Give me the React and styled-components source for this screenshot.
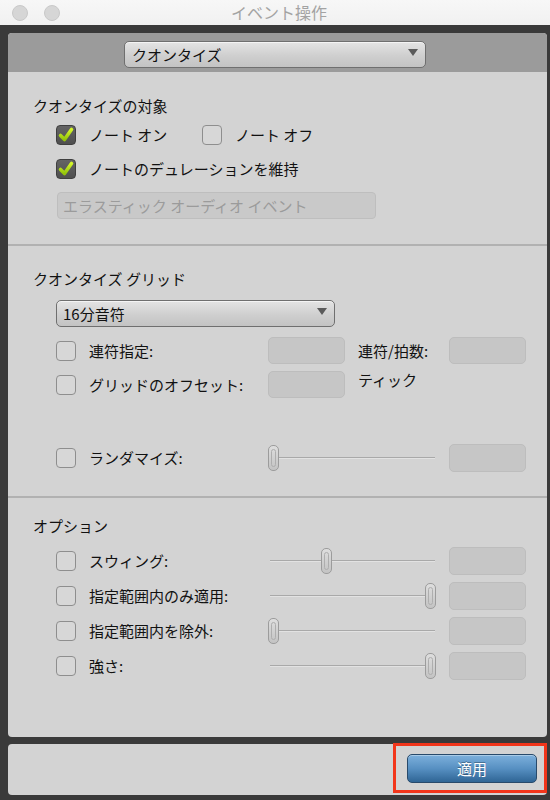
import React from 'react';
import styled, { createGlobalStyle } from 'styled-components';

const Global = createGlobalStyle`
  body {
    margin: 0;
    font-family: "Noto Sans CJK JP", "Noto Sans", sans-serif;
    color: #111;
  }
`;

const CheckMark = () => (
  <svg width="18" height="18" viewBox="0 0 18 18">
    <defs>
      <linearGradient id="lime" x1="0" y1="0" x2="0" y2="1">
        <stop offset="0" stopColor="#d4f52a" />
        <stop offset="1" stopColor="#94c40a" />
      </linearGradient>
    </defs>
    <path d="M3.5 9.5 L7.5 13.5 L14.5 3.5" fill="none" stroke="url(#lime)" strokeWidth="3.6" strokeLinecap="round" strokeLinejoin="round" />
  </svg>
);

const Check = ({ checked }) => <Box $checked={checked}>{checked && <CheckMark />}</Box>;

const Slider = ({ value }) => (
  <SliderWrap>
    <Track />
    <Thumb style={{ left: `${value * 157}px` }} />
  </SliderWrap>
);

const App = () => {
  return (
    <Window>
      <Global />
      <TitleBar>
        <Lights>
          <Light />
          <Light />
        </Lights>
        <Title>イベント操作</Title>
        <span />
      </TitleBar>
      <Frame>
        <MainPanel>
          <Header>
            <Select $width={302} $textLeft={7}>
              クオンタイズ
              <Arrow />
            </Select>
          </Header>

          <Section $pt={24} $pb={25} $divider>
            <SectionTitle>クオンタイズの対象</SectionTitle>
            <Indent $mt={8} $gap={12}>
              <Row $h={22}>
                <Option $width={146}>
                  <Check checked />
                  <Label>ノート オン</Label>
                </Option>
                <Option>
                  <Check />
                  <Label>ノート オフ</Label>
                </Option>
              </Row>
              <Row $h={22}>
                <Option>
                  <Check checked />
                  <Label>ノートのデュレーションを維持</Label>
                </Option>
              </Row>
              <DisabledField>エラスティック オーディオ イベント</DisabledField>
            </Indent>
          </Section>

          <Section $pt={23} $pb={24} $divider>
            <SectionTitle>クオンタイズ グリッド</SectionTitle>
            <Indent $mt={11} $gap={0}>
              <Select $width={279} $textLeft={6}>
                16分音符
                <Arrow />
              </Select>
              <Row $h={27} $mt={10}>
                <Check />
                <RowLabel>連符指定:</RowLabel>
                <NumField />
                <SideLabel>連符/拍数:</SideLabel>
                <NumField $gap />
              </Row>
              <Row $h={27} $mt={7}>
                <Check />
                <RowLabel>グリッドのオフセット:</RowLabel>
                <NumField />
                <SideLabel $top>ティック</SideLabel>
              </Row>
              <Row $h={28} $mt={46}>
                <Check />
                <RowLabel>ランダマイズ:</RowLabel>
                <Slider value={0} />
                <NumField $gap />
              </Row>
            </Indent>
          </Section>

          <Section $pt={18} $grow>
            <SectionTitle>オプション</SectionTitle>
            <Indent $mt={11} $gap={7}>
              {[
                ['スウィング:', 0.34],
                ['指定範囲内のみ適用:', 1],
                ['指定範囲内を除外:', 0],
                ['強さ:', 1],
              ].map(([label, v]) => (
                <Row $h={28} key={label}>
                  <Check />
                  <RowLabel>{label}</RowLabel>
                  <Slider value={v} />
                  <NumField $gap />
                </Row>
              ))}
            </Indent>
          </Section>
        </MainPanel>

        <Footer>
          <Highlight>
            <ApplyButton>適用</ApplyButton>
          </Highlight>
        </Footer>
      </Frame>
    </Window>
  );
};

export default App;

const Window = styled.div`
  width: 550px;
  height: 800px;
  background: #3a3a3a;
  display: flex;
  flex-direction: column;
  overflow: hidden;
`;

const TitleBar = styled.div`
  height: 25px;
  flex: none;
  background: linear-gradient(#f7f7f7, #f1f1f1);
  display: grid;
  grid-template-columns: 1fr auto 1fr;
  align-items: center;
`;

const Lights = styled.div`
  display: flex;
  gap: 16px;
  padding-left: 12px;
`;

const Light = styled.div`
  width: 14px;
  height: 14px;
  border-radius: 50%;
  background: #d6d6d6;
  border: 1px solid #c9c9c9;
`;

const Title = styled.div`
  font-size: 16px;
  color: #a3a3a3;
  line-height: 25px;
  padding-left: 8px;
`;

const Frame = styled.div`
  flex: 1;
  padding: 8px 3px 5px 8px;
  display: flex;
  flex-direction: column;
  gap: 7px;
`;

const MainPanel = styled.div`
  height: 704px;
  background: #d3d3d3;
  border-radius: 4px;
  overflow: hidden;
  display: flex;
  flex-direction: column;
`;

const Header = styled.div`
  height: 39px;
  flex: none;
  box-sizing: border-box;
  background: #9b9b9b;
  display: flex;
  justify-content: center;
  align-items: flex-start;
  padding: 8px 5px 0 0;
`;

const Select = styled.div`
  position: relative;
  width: ${(p) => p.$width}px;
  height: 27px;
  box-sizing: border-box;
  border: 1px solid #6f6f6f;
  border-radius: 5px;
  background: linear-gradient(#e4e4e4, #cfcfcf 55%, #c3c3c3);
  box-shadow: inset 0 1px 0 rgba(255, 255, 255, 0.6);
  font-size: 15px;
  line-height: 25px;
  padding-left: ${(p) => p.$textLeft}px;
  color: #111;
`;

const Arrow = styled.span`
  position: absolute;
  right: 7px;
  top: 7px;
  width: 0;
  height: 0;
  border-left: 5px solid transparent;
  border-right: 5px solid transparent;
  border-top: 7px solid #5b5b5b;
`;

const Section = styled.div`
  flex: ${(p) => (p.$grow ? 1 : 'none')};
  padding: ${(p) => p.$pt}px 0 ${(p) => p.$pb || 0}px 25px;
  border-bottom: ${(p) => (p.$divider ? '2px solid #b1b1b1' : 'none')};
  display: flex;
  flex-direction: column;
`;

const SectionTitle = styled.div`
  font-size: 15px;
  line-height: 20px;
  height: 20px;
`;

const Indent = styled.div`
  margin: ${(p) => p.$mt}px 0 0 23px;
  display: flex;
  flex-direction: column;
  gap: ${(p) => p.$gap}px;
`;

const Row = styled.div`
  display: flex;
  align-items: center;
  height: ${(p) => p.$h}px;
  margin-top: ${(p) => p.$mt || 0}px;
`;

const Option = styled.div`
  display: flex;
  align-items: center;
  width: ${(p) => (p.$width ? `${p.$width}px` : 'auto')};
`;

const Box = styled.div`
  width: 20px;
  height: 20px;
  flex: none;
  box-sizing: border-box;
  border-radius: 4px;
  border: ${(p) => (p.$checked ? '1px solid #3f3f3f' : '1.5px solid #8e8e8e')};
  background: ${(p) => (p.$checked ? 'linear-gradient(#646464, #4f4f4f)' : '#d7d7d7')};
  display: flex;
  align-items: center;
  justify-content: center;
`;

const Label = styled.span`
  font-size: 15px;
  line-height: 20px;
  margin-left: 13px;
  white-space: nowrap;
`;

const RowLabel = styled(Label)`
  width: 179px;
  margin-left: 13px;
  flex: none;
`;

const SideLabel = styled.span`
  width: 78px;
  flex: none;
  margin-left: 13px;
  font-size: 15px;
  line-height: 18px;
  align-self: ${(p) => (p.$top ? 'flex-start' : 'center')};
  white-space: nowrap;
`;

const NumField = styled.div`
  width: 77px;
  height: 100%;
  flex: none;
  box-sizing: border-box;
  margin-left: ${(p) => (p.$gap ? 13 : 0)}px;
  border: 1px solid #bdbdbd;
  border-radius: 5px;
  background: #c6c6c6;
`;

const DisabledField = styled.div`
  width: 319px;
  height: 27px;
  margin-left: 1px;
  box-sizing: border-box;
  border: 1px solid #bebebe;
  border-radius: 4px;
  background: #c9c9c9;
  color: #9b9b9b;
  font-size: 15px;
  line-height: 25px;
  padding-left: 5px;
`;

const SliderWrap = styled.div`
  position: relative;
  width: 168px;
  height: 28px;
  flex: none;
`;

const Track = styled.div`
  position: absolute;
  left: 2px;
  right: 1px;
  top: 13px;
  height: 1px;
  background: #a9a9a9;
  box-shadow: 0 1px 0 #e2e2e2;
`;

const Thumb = styled.div`
  position: absolute;
  top: 1px;
  width: 11px;
  height: 26px;
  box-sizing: border-box;
  border: 1px solid #9c9c9c;
  border-radius: 5px;
  background: linear-gradient(#dedede, #c3c3c3);

  &::after {
    content: '';
    position: absolute;
    left: 2px;
    right: 2px;
    top: 3px;
    bottom: 3px;
    border: 1px solid #aeaeae;
    border-radius: 3px;
  }
`;

const Footer = styled.div`
  height: 51px;
  flex: none;
  background: #d3d3d3;
  border-radius: 4px;
  display: flex;
  justify-content: flex-end;
  align-items: flex-start;
`;

const Highlight = styled.div`
  width: 154px;
  height: 50px;
  margin-top: -1px;
  box-sizing: border-box;
  border: 3px solid #f2361b;
  padding: 8px 7px 0 11px;
`;

const ApplyButton = styled.button`
  width: 130px;
  height: 29px;
  box-sizing: border-box;
  border: 1px solid #284a6b;
  border-radius: 5px;
  background: linear-gradient(#7db0dc, #5790c2 50%, #2f6595);
  box-shadow: inset 0 1px 0 rgba(255, 255, 255, 0.35);
  color: #fff;
  font-family: "Noto Sans CJK JP", sans-serif;
  font-size: 15px;
  text-shadow: 0 -1px 0 rgba(0, 0, 0, 0.3);
  padding: 0;
`;
